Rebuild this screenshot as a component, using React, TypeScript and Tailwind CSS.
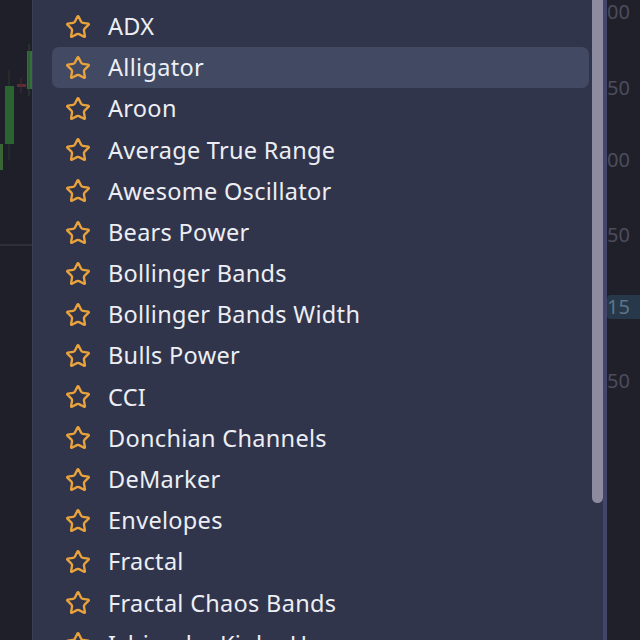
import { Star } from 'lucide-react';

const INDICATORS = [
  'ADX',
  'Alligator',
  'Aroon',
  'Average True Range',
  'Awesome Oscillator',
  'Bears Power',
  'Bollinger Bands',
  'Bollinger Bands Width',
  'Bulls Power',
  'CCI',
  'Donchian Channels',
  'DeMarker',
  'Envelopes',
  'Fractal',
  'Fractal Chaos Bands',
  'Ichimoku Kinko Hyo',
];

const PRICES = [
  { label: '1.1300', top: 'mt-0' },
  { label: '1.1250', top: 'mt-[52px]' },
  { label: '1.1200', top: 'mt-[48px]' },
  { label: '1.1150', top: 'mt-[51px]' },
];

function ChartStrip() {
  return (
    <div className="w-[32px] shrink-0 h-full bg-[#1f1f29]">
      <svg width="32" height="640" viewBox="0 0 32 640">
        <line x1="0" y1="245" x2="32" y2="245" stroke="#34343f" strokeWidth="1.5" />
        <line x1="9" y1="70" x2="9" y2="160" stroke="#2a3a2e" strokeWidth="1" />
        <rect x="5" y="86" width="9" height="58" fill="#2c6332" />
        <rect x="0" y="144" width="3" height="26" fill="#3a6534" />
        <rect x="27" y="51" width="5" height="38" fill="#357038" />
        <line x1="29" y1="44" x2="29" y2="96" stroke="#2a4a30" strokeWidth="1" />
        <rect x="17" y="84" width="9" height="3" fill="#5e2d36" />
        <line x1="21" y1="78" x2="21" y2="93" stroke="#4a2a30" strokeWidth="1" />
      </svg>
    </div>
  );
}

function PriceAxis() {
  return (
    <div className="w-[33px] shrink-0 h-full bg-[#20202b] overflow-hidden flex flex-col text-[20px] leading-[24px] text-[#4c4c5b]">
      {PRICES.map((p) => (
        <div key={p.label} className={`${p.top} flex justify-end pr-[10px] whitespace-nowrap`}>
          {p.label}
        </div>
      ))}
      <div className="mt-[48px] h-[24px] flex justify-end items-center pr-[10px] rounded-l-[4px] bg-[#26384a] text-[#5c7688] whitespace-nowrap">
        1.1115
      </div>
      <div className="mt-[50px] flex justify-end pr-[10px] whitespace-nowrap">1.1050</div>
    </div>
  );
}

export default function App() {
  return (
    <div
      className="w-[640px] h-[640px] flex overflow-hidden bg-[#1f1f29]"
      style={{ fontFamily: '"Noto Sans", "Open Sans", sans-serif' }}
    >
      <ChartStrip />

      {/* Indicator dropdown */}
      <div className="flex-1 h-full flex bg-[#31354b] border-l border-[#3a3e56]">
        <ul className="flex-1 pt-[6px] pl-[19px] pr-[3px]">
          {INDICATORS.map((name) => (
            <li
              key={name}
              className={`h-[41.2px] flex items-center gap-[17px] pl-[13px] rounded-[7px] ${
                name === 'Alligator' ? 'bg-[#414963]' : ''
              }`}
            >
              <Star className="w-[26px] h-[26px] text-[#e9a23c] shrink-0" strokeWidth={2.2} />
              <span className="text-[23.5px] tracking-[0.3px] text-[#eceef4] whitespace-nowrap">
                {name}
              </span>
            </li>
          ))}
        </ul>

        {/* Scrollbar */}
        <div className="w-[15px] shrink-0 h-full flex">
          <div className="w-[11px] h-[503px] bg-[#8c8b9f] rounded-b-[6px]" />
          <div className="w-[4px] h-full bg-[#43456a]" />
        </div>
      </div>

      <PriceAxis />
    </div>
  );
}
